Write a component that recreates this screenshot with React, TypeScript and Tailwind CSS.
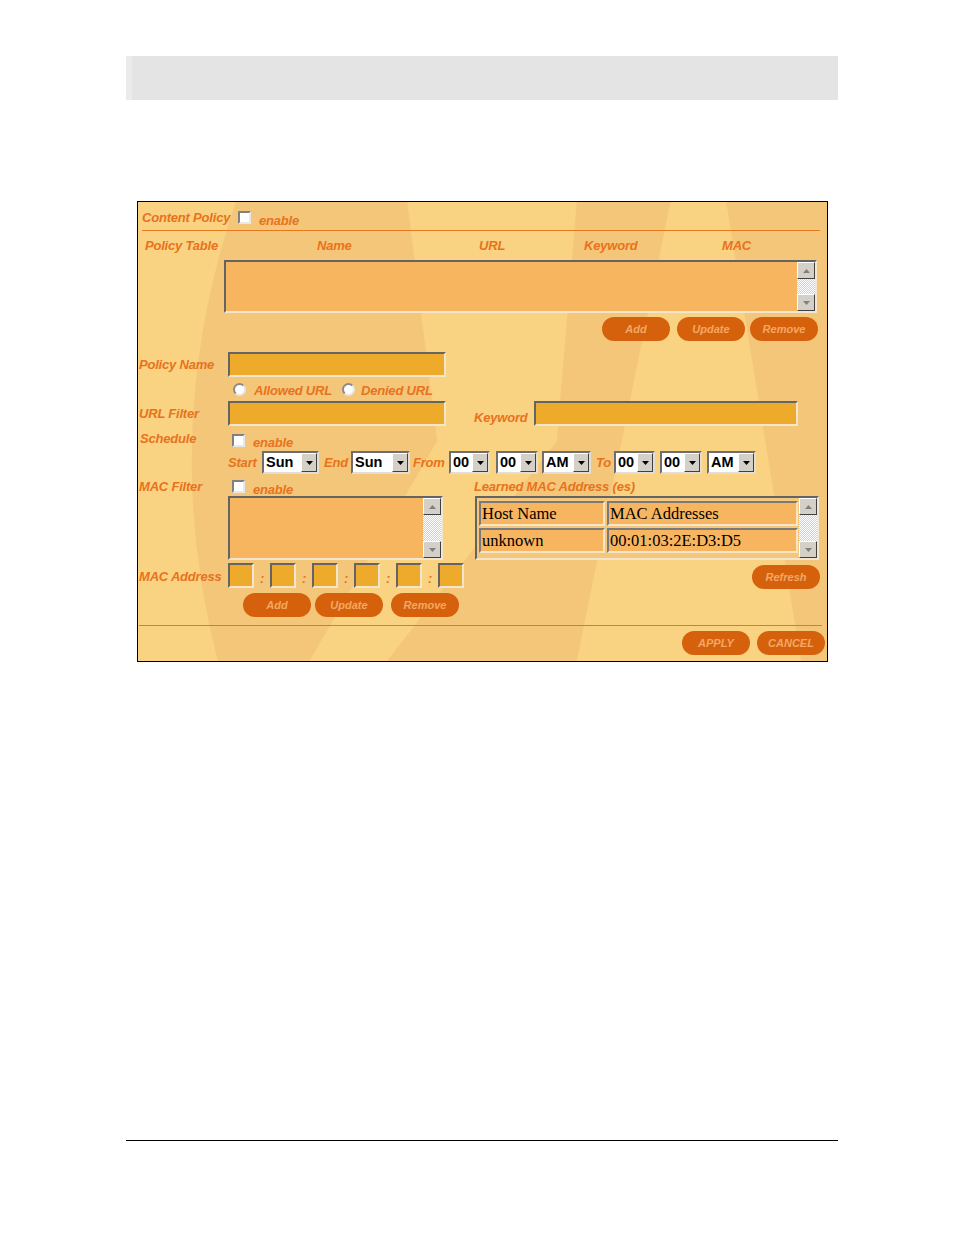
import clsx from "clsx";

const inset =
  "border-2 border-t-[#646464] border-l-[#646464] border-b-[#F4E6CC] border-r-[#F4E6CC]";
const label = "font-bold italic text-[13px] leading-[15px] tracking-[-0.2px] text-[#E8731C] whitespace-nowrap";

function Backdrop() {
  return (
    <svg
      className="absolute inset-0 w-full h-full pointer-events-none"
      viewBox="0 0 691 461"
      preserveAspectRatio="none"
    >
      <path d="M0 0 H98 Q20 230 80 461 H0 Z" fill="#F9D282" />
      <path d="M270 0 H440 L420 240 L250 461 H172 L300 240 Z" fill="#F9D282" />
      <path d="M534 0 H590 L665 461 H440 Z" fill="#F9D282" />
    </svg>
  );
}

function OrangeButton({ text, className }: { text: string; className?: string }) {
  return (
    <div
      className={clsx(
        "w-[68px] h-[24px] rounded-full bg-[#D6610D] flex items-center justify-center font-bold italic text-[11px] text-[#F3A862]",
        className
      )}
    >
      {text}
    </div>
  );
}

function Checkbox({ className }: { className?: string }) {
  return (
    <div
      className={clsx(
        "w-[13px] h-[13px] bg-white border-2 border-t-[#808080] border-l-[#808080] border-b-[#E8E8E8] border-r-[#E8E8E8] shrink-0",
        className
      )}
    />
  );
}

function Radio() {
  return (
    <div className="w-[13px] h-[13px] rounded-full bg-white border-2 border-t-[#8a8a8a] border-l-[#8a8a8a] border-b-[#e6e6e6] border-r-[#e6e6e6] shrink-0" />
  );
}

function Arrow({ up, color }: { up?: boolean; color: string }) {
  return (
    <svg width="7" height="4" viewBox="0 0 7 4">
      <path d={up ? "M0 4 L3.5 0 L7 4 Z" : "M0 0 L7 0 L3.5 4 Z"} fill={color} />
    </svg>
  );
}

function ScrollButton({ up }: { up?: boolean }) {
  return (
    <div className="h-[17px] bg-[#D4D0C8] border border-t-white border-l-white border-b-[#404040] border-r-[#404040] flex items-center justify-center">
      <Arrow up={up} color="#808080" />
    </div>
  );
}

function Scrollbar({ className }: { className?: string }) {
  return (
    <div className={clsx("w-[18px] flex flex-col shrink-0", className)}>
      <ScrollButton up />
      <div className="flex-1 bg-[image:repeating-conic-gradient(#d4d0c8_0%_25%,#ffffff_0%_50%)] bg-[length:2px_2px]" />
      <ScrollButton />
    </div>
  );
}

function Select({ value, w, className }: { value: string; w: string; className?: string }) {
  return (
    <div
      className={clsx(
        "h-[23px] flex bg-white border-2 border-t-[#6e6e6e] border-l-[#6e6e6e] border-b-[#E2DED6] border-r-[#E2DED6] shrink-0",
        w,
        className
      )}
    >
      <span className="flex-1 pl-[2px] font-bold text-[14.5px] leading-[19px] text-black">{value}</span>
      <div className="w-[16px] h-full bg-[#D4D0C8] border border-t-white border-l-white border-b-[#404040] border-r-[#404040] flex items-center justify-center">
        <Arrow color="#000" />
      </div>
    </div>
  );
}

function Field({ w }: { w: string }) {
  return <div className={clsx("h-[25px] bg-[#EEAA2A] shrink-0", inset, w)} />;
}

function Cell({ text, w }: { text: string; w: string }) {
  return (
    <div
      className={clsx(
        "h-[25px] bg-[#F7B55F] border-2 border-t-[#7a7a7a] border-l-[#7a7a7a] border-b-[#F6E6C6] border-r-[#F6E6C6] pl-[1px] font-['Liberation_Serif',serif] text-[16.5px] leading-[21px] text-black whitespace-nowrap overflow-hidden",
        w
      )}
    >
      {text}
    </div>
  );
}

export default function App() {
  return (
    <div className="w-[954px] h-[1235px] bg-white overflow-hidden font-['Liberation_Sans',Arial,sans-serif]">
      <div className="ml-[126px] mt-[56px] w-[712px] h-[44px] bg-[#E4E4E4] flex">
        <div className="w-[6px] h-full bg-[#EBEBEB]" />
      </div>

      <div className="ml-[137px] mt-[101px] w-[691px] h-[461px] border border-black relative bg-[#F4C67A] overflow-hidden">
        <Backdrop />
        <div className="relative flex flex-col">
          {/* Content Policy */}
          <div className="flex h-[28px]">
            <div className={clsx(label, "w-[96px] pl-[4px] mt-[8px]")}>Content Policy</div>
            <Checkbox className="ml-[4px] mt-[9px]" />
            <div className={clsx(label, "ml-[8px] mt-[11px]")}>enable</div>
          </div>
          <div className="ml-[4px] w-[678px] h-px bg-[#E8781E]" />

          {/* Policy table header */}
          <div className={clsx(label, "flex items-center h-[29px] pl-[7px]")}>
            <span className="w-[172px]">Policy Table</span>
            <span className="w-[162px]">Name</span>
            <span className="w-[105px]">URL</span>
            <span className="w-[138px]">Keyword</span>
            <span>MAC</span>
          </div>
          <div className={clsx("ml-[86px] w-[593px] h-[53px] bg-[#F7B55F] flex justify-end", inset)}>
            <Scrollbar />
          </div>

          <div className="flex mt-[4px] h-[24px]">
            <OrangeButton text="Add" className="ml-[464px]" />
            <OrangeButton text="Update" className="ml-[7px]" />
            <OrangeButton text="Remove" className="ml-[5px]" />
          </div>

          {/* Policy Name */}
          <div className="flex items-center mt-[11px] h-[25px]">
            <div className={clsx(label, "w-[90px] pl-[1px]")}>Policy Name</div>
            <Field w="w-[218px]" />
          </div>

          {/* radios */}
          <div className="flex items-center mt-[4px] h-[17px] pl-[95px]">
            <Radio />
            <span className={clsx(label, "ml-[8px] w-[88px] mt-[2px]")}>Allowed URL</span>
            <Radio />
            <span className={clsx(label, "ml-[6px] mt-[2px]")}>Denied URL</span>
          </div>

          {/* URL filter */}
          <div className="flex mt-[3px] h-[25px]">
            <div className={clsx(label, "w-[90px] pl-[1px] self-center")}>URL Filter</div>
            <Field w="w-[218px]" />
            <div className={clsx(label, "ml-[28px] w-[60px] self-end pb-[1px]")}>Keyword</div>
            <Field w="w-[264px]" />
          </div>

          {/* Schedule */}
          <div className="flex mt-[3px] h-[19px]">
            <div className={clsx(label, "w-[94px] pl-[2px] mt-[2px]")}>Schedule</div>
            <Checkbox className="mt-[5px]" />
            <div className={clsx(label, "ml-[8px] mt-[6px]")}>enable</div>
          </div>

          {/* Start / End / From / To */}
          <div className="flex items-center mt-[3px] h-[23px] pl-[90px]">
            <span className={clsx(label, "w-[34px]")}>Start</span>
            <Select value="Sun" w="w-[57px]" />
            <span className={clsx(label, "ml-[5px] w-[27px]")}>End</span>
            <Select value="Sun" w="w-[59px]" />
            <span className={clsx(label, "ml-[3px] w-[36px]")}>From</span>
            <Select value="00" w="w-[41px]" />
            <Select value="00" w="w-[42px]" className="ml-[6px]" />
            <Select value="AM" w="w-[49px]" className="ml-[4px]" />
            <span className={clsx(label, "ml-[5px] w-[18px]")}>To</span>
            <Select value="00" w="w-[41px]" />
            <Select value="00" w="w-[42px]" className="ml-[5px]" />
            <Select value="AM" w="w-[49px]" className="ml-[5px]" />
          </div>

          {/* MAC filter */}
          <div className="flex mt-[3px] h-[18px]">
            <div className={clsx(label, "w-[94px] pl-[1px] mt-[2px]")}>MAC Filter</div>
            <div className="w-[242px] flex">
              <Checkbox className="mt-[3px]" />
              <div className={clsx(label, "ml-[8px] mt-[5px]")}>enable</div>
            </div>
            <div className={clsx(label, "mt-[2px]")}>Learned MAC Address (es)</div>
          </div>

          {/* MAC list + learned table */}
          <div className="flex mt-[1px] h-[64px]">
            <div className={clsx("ml-[90px] w-[215px] h-full bg-[#F7B55F] flex justify-end", inset)}>
              <Scrollbar />
            </div>
            <div className={clsx("ml-[32px] w-[344px] h-full flex bg-[#F5C77C]", inset)}>
              <div className="flex-1 flex flex-col gap-[2px] pl-[2px] pt-[3px]">
                <div className="flex gap-[2px]">
                  <Cell text="Host Name" w="w-[126px]" />
                  <Cell text="MAC Addresses" w="w-[191px]" />
                </div>
                <div className="flex gap-[2px]">
                  <Cell text="unknown" w="w-[126px]" />
                  <Cell text="00:01:03:2E:D3:D5" w="w-[191px]" />
                </div>
              </div>
              <Scrollbar />
            </div>
          </div>

          {/* MAC Address */}
          <div className="flex mt-[3px] h-[26px]">
            <div className={clsx(label, "w-[90px] pl-[1px] self-center")}>MAC Address</div>
            {[0, 1, 2, 3, 4, 5].map((i) => (
              <div key={i} className="flex">
                {i > 0 && (
                  <span className={clsx(label, "w-[16px] text-center pt-[8px]")}>:</span>
                )}
                <Field w="w-[26px]" />
              </div>
            ))}
            <OrangeButton text="Refresh" className="ml-[288px] mt-[2px]" />
          </div>

          <div className="flex mt-[4px] h-[24px]">
            <OrangeButton text="Add" className="ml-[105px]" />
            <OrangeButton text="Update" className="ml-[4px]" />
            <OrangeButton text="Remove" className="ml-[8px]" />
          </div>

          <div className="mt-[8px] ml-[1px] w-[683px] h-px bg-[#E8781E]" />

          <div className="flex mt-[5px] h-[24px]">
            <OrangeButton text="APPLY" className="ml-[544px]" />
            <OrangeButton text="CANCEL" className="ml-[7px]" />
          </div>
        </div>
      </div>

      <div className="ml-[126px] mt-[478px] w-[712px] h-px bg-black" />
    </div>
  );
}
